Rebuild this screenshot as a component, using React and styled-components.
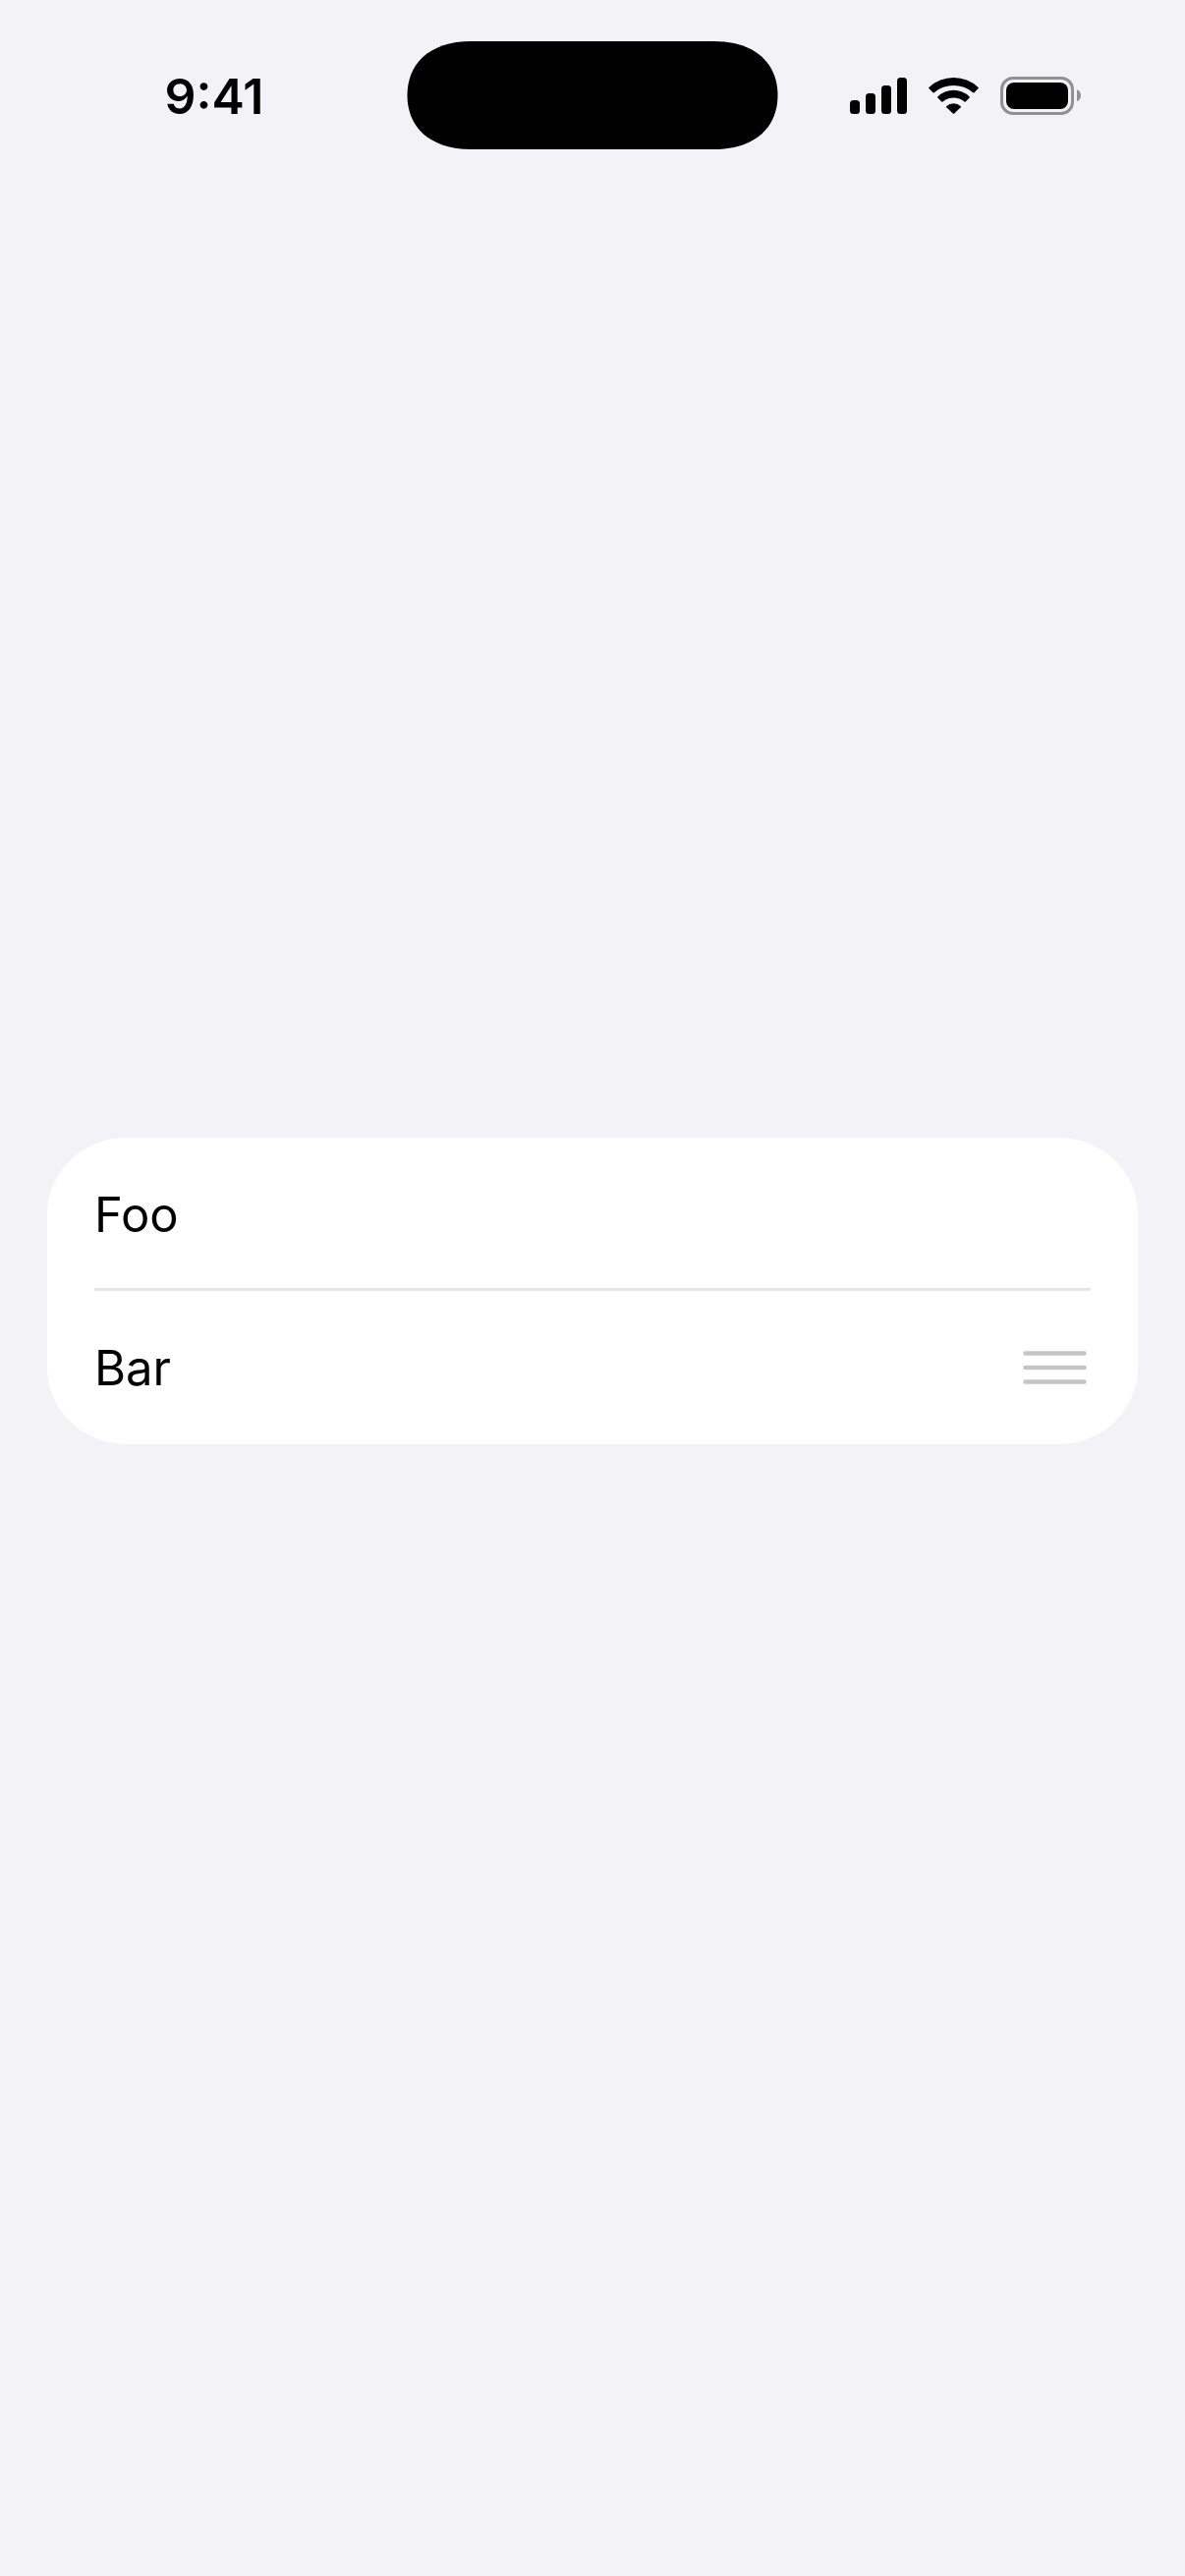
import React from "react";
import styled, { createGlobalStyle } from "styled-components";

const GlobalStyle = createGlobalStyle`
  *, *::before, *::after { box-sizing: border-box; }
  body {
    margin: 0;
    background: #f2f2f7;
    color: #000;
    font-family: Inter, "Liberation Sans", sans-serif;
  }
`;

const Screen = styled.div`
  min-height: 100vh;
  display: flex;
  flex-direction: column;
`;

const StatusBar = styled.header`
  display: grid;
  grid-template-columns: 1fr auto 1fr;
  align-items: center;
  padding: 42px 0;
`;

const Time = styled.time`
  padding: 2px 0 0 22px;
  text-align: center;
  font-size: 50px;
  line-height: 60px;
  font-weight: 600;
`;

const Indicators = styled.div`
  display: flex;
  justify-content: center;
  align-items: center;
  gap: 22px;
  padding-right: 34px;
`;

const Glyph = styled.svg`
  display: block;
  flex: none;
`;

const Content = styled.main`
  flex: 1;
  display: flex;
  flex-direction: column;
  justify-content: center;
  padding: 0 48px 188px;
`;

const List = styled.ul`
  margin: 0;
  padding: 0 48px;
  list-style: none;
  background: #fff;
  border-radius: 80px / 78px;
`;

const Row = styled.li`
  display: flex;
  align-items: center;
  justify-content: space-between;
  height: 156px;

  &:not(:last-child) {
    box-shadow: inset 0 -3px #e6e6e6;
  }
`;

const Label = styled.span`
  padding-top: 2px;
  font-size: 49px;
  line-height: 60px;
`;

const Handle = styled.button`
  padding: 0 4px;
  border: 0;
  background: none;
  cursor: grab;
`;

function Island() {
  return (
    <Glyph width="378" height="110" viewBox="0 0 378 110" aria-hidden="true">
      <path d="M0.500 55C0.500 24.600 21 0 66 0H312C357 0 377.500 24.600 377.500 55C377.500 85.400 357 110 312 110H66C21 110 0.500 85.400 0.500 55Z" />
    </Glyph>
  );
}

function Signal() {
  return (
    <Glyph width="58" height="40" viewBox="0 0 58 40" role="img" aria-label="Signal">
      <rect x="0" y="25" width="10" height="14" rx="3.500" />
      <rect x="16" y="18" width="10" height="21" rx="3.500" />
      <rect x="32" y="10" width="10" height="29" rx="3.500" />
      <rect x="48" y="2" width="10" height="37" rx="3.500" />
    </Glyph>
  );
}

function Wifi() {
  return (
    <Glyph width="51" height="40" viewBox="0 0 51 40" role="img" aria-label="Wi-Fi">
      <path d="M0.400 11.900A36.700 36.700 0 0 1 50.600 11.900Q51.200 12.500 50.600 13.100L46.500 17.200Q45.900 17.700 45.300 17.200A30.500 30.500 0 0 0 5.700 17.200Q5.100 17.700 4.500 17.200L0.400 13.100Q-0.200 12.500 0.400 11.900Z" />
      <path d="M9.300 21.400A23.300 23.300 0 0 1 41.700 21.400Q42.300 22 41.700 22.600L37.700 26.600Q37.100 27.100 36.500 26.600A17 17 0 0 0 14.500 26.600Q13.900 27.100 13.300 26.600L9.300 22.600Q8.700 22 9.300 21.400Z" />
      <path d="M18.300 31A11 11 0 0 1 32.700 31Q33.300 31.600 32.700 32.200L26.200 38.500Q25.500 39.100 24.800 38.500L18.300 32.200Q17.700 31.600 18.300 31Z" />
    </Glyph>
  );
}

function Battery() {
  return (
    <Glyph width="82" height="40" viewBox="0 0 82 40" role="img" aria-label="Battery full">
      <rect x="1.500" y="2.500" width="72" height="36" rx="11.500" fill="none" stroke="#919194" strokeWidth="3" />
      <rect x="6" y="7" width="63" height="27" rx="8" />
      <path d="M78 14.300Q82 16 82 20.300Q82 24.500 78 26.300Z" fill="#919194" />
    </Glyph>
  );
}

function Grip() {
  return (
    <Glyph width="65" height="36" viewBox="0 0 65 36" aria-hidden="true">
      <path d="M2.500 3.500H62.500M2.500 18H62.500M2.500 32.500H62.500" stroke="#c5c5c7" strokeWidth="4.500" strokeLinecap="round" />
    </Glyph>
  );
}

const items = [
  { label: "Foo", movable: false },
  { label: "Bar", movable: true },
];

export default function App() {
  return (
    <Screen>
      <GlobalStyle />
      <StatusBar>
        <Time>9:41</Time>
        <Island />
        <Indicators>
          <Signal />
          <Wifi />
          <Battery />
        </Indicators>
      </StatusBar>
      <Content>
        <List>
          {items.map(({ label, movable }) => (
            <Row key={label}>
              <Label>{label}</Label>
              {movable && (
                <Handle type="button" aria-label={`Reorder ${label}`}>
                  <Grip />
                </Handle>
              )}
            </Row>
          ))}
        </List>
      </Content>
    </Screen>
  );
}
